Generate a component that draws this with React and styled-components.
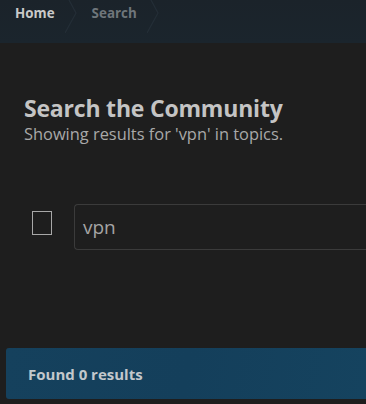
import React from 'react'
import styled, {createGlobalStyle} from 'styled-components';

const GlobalStyle = createGlobalStyle`
    html, body {
        margin: 0;
        padding: 0;
        background: #1e1e1e;
        overflow: hidden;
    }
    body {
        font-family: "Open Sans", "Noto Sans", sans-serif;
    }
`;

const Page = styled.div`
    width: 100%;
    min-height: 404px;
    background: #1e1e1e;
`;

const Header = styled.nav`
    height: 43px;
    background: linear-gradient(180deg, #1b232a 0%, #1b252d 100%);
    display: flex;
    align-items: flex-start;
`;

const Crumb = styled.div`
    height: 33px;
    display: flex;
    align-items: center;
    padding: 0 0 7px 0;
    box-sizing: border-box;
    font-size: 13.4px;
    font-weight: 700;
    color: ${props => props.active ? '#6f767b' : '#c9c9c9'};
    padding-left: ${props => props.first ? '15px' : '13px'};
`;

const Chevron = styled.svg`
    width: 14px;
    height: 34px;
    display: block;
    margin-left: ${props => props.gap || 8}px;
`;

const Sep = ({gap}) => (
    <Chevron gap={gap} viewBox="0 0 14 34">
        <polyline points="4,0 11,13 0,33" fill="none" stroke="#242e37" strokeWidth="1.2"/>
    </Chevron>
)

const Content = styled.main`
    padding: 50px 0 0 24px;
`;

const Title = styled.h1`
    margin: 0;
    font-size: 23px;
    line-height: 30px;
    letter-spacing: -0.2px;
    font-weight: 700;
    color: #c4c4c4;
`;

const Subtitle = styled.p`
    margin: 0;
    font-size: 16.4px;
    line-height: 22px;
    color: #a9a9a9;
`;

const SearchRow = styled.div`
    display: flex;
    align-items: flex-start;
    margin-top: 59px;
    padding-left: 8px;
`;

const Box = styled.span`
    width: 18px;
    height: 22px;
    margin-top: 7px;
    border: 1px solid #a8a8a8;
    display: block;
    flex-shrink: 0;
`;

const Input = styled.div`
    margin-left: 22px;
    flex: 1;
    height: 44px;
    border: 1px solid #3b3b3b;
    border-right: none;
    border-radius: 4px 0 0 4px;
    display: flex;
    align-items: center;
    padding-left: 8px;
    font-size: 19px;
    color: #a5a5a5;
`;

const Results = styled.div`
    margin: 98px 0 0 6px;
    height: 51px;
    border-radius: 3px 0 0 3px;
    background: linear-gradient(100deg, #15415d 0%, #143f5b 50%, #15435f 100%);
    display: flex;
    align-items: center;
    padding-left: 22px;
    font-size: 15px;
    font-weight: 700;
    color: #c3c8cc;
`;

const App = () => {
    return (
        <Page>
            <GlobalStyle/>
            <Header>
                <Crumb first>Home</Crumb>
                <Sep gap={10}/>
                <Crumb active>Search</Crumb>
                <Sep gap={10}/>
            </Header>
            <Content>
                <Title>Search the Community</Title>
                <Subtitle>Showing results for 'vpn' in topics.</Subtitle>
                <SearchRow>
                    <Box/>
                    <Input>vpn</Input>
                </SearchRow>
            </Content>
            <Results>Found 0 results</Results>
        </Page>
    )
}

export default App
